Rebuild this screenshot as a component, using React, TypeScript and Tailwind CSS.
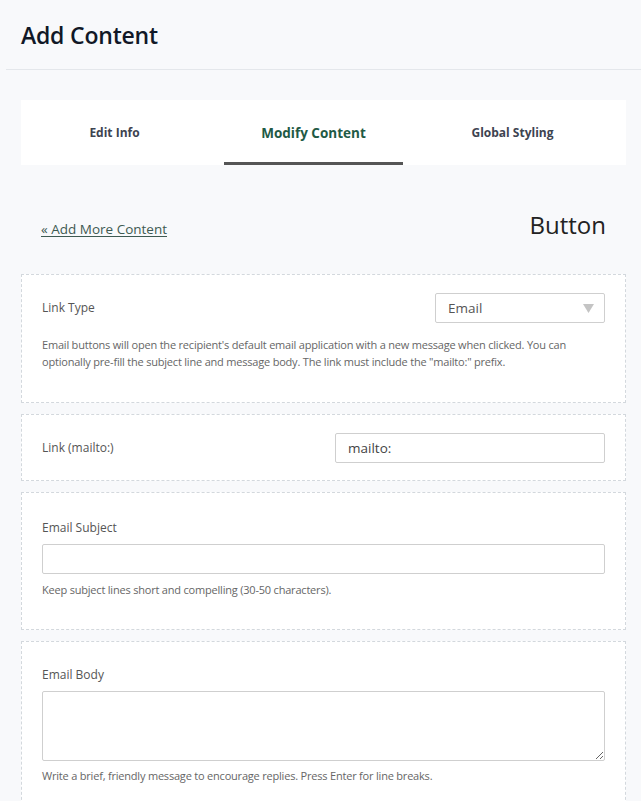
import { useState } from 'react';

const tabs = ['Edit Info', 'Modify Content', 'Global Styling'];

export default function App() {
    const [active, setActive] = useState('Modify Content');
    const [link, setLink] = useState('mailto:');
    const [subject, setSubject] = useState('');
    const [body, setBody] = useState('');

    return (
        <div className="min-h-screen bg-[#f8f9fb] text-[#555] font-['Open_Sans',sans-serif]">
            {/* header */}
            <div className="h-[70px] ml-[6px] border-b border-[#e4e7eb] flex items-center">
                <h1 className="pl-[15px] pt-[2px] text-[23px] font-semibold text-[#111827] tracking-[-0.2px]">Add Content</h1>
            </div>

            <div className="pl-[21px] pr-[15px]">
                {/* tabs */}
                <div className="mt-[30px] h-[65px] bg-white flex pl-[4px] gap-[20px]">
                    {tabs.map(t => (
                        <button
                            key={t}
                            onClick={() => setActive(t)}
                            className={
                                'w-[179px] h-full flex items-center justify-center font-bold border-b-[3px] pt-[4px] ' +
                                (active === t ? 'text-[#1f5a45] text-[13.5px] border-[#555]' : 'text-[12px] text-[#3d4350] border-transparent')
                            }
                        >
                            {t}
                        </button>
                    ))}
                </div>

                {/* link + title */}
                <div className="flex items-center justify-between mt-[42px] h-[35px] pl-[20px] pr-[20px]">
                    <a href="#" className="text-[13.5px] text-[#3e5a52] underline underline-offset-2 mt-[9px]">« Add More Content</a>
                    <div className="text-[24px] text-[#222]">Button</div>
                </div>

                <div className="mt-[32px] flex flex-col gap-[11px]">
                    {/* link type */}
                    <div className="bg-white border border-dashed border-[#d3d8dd] px-[20px] pt-[18px] pb-[32px]">
                        <div className="flex items-center justify-between">
                            <span className="text-[12px]">Link Type</span>
                            <div className="w-[170px] h-[30px] border border-[#cfcfcf] rounded-[2px] flex items-center justify-between pl-[12px] pr-[10px]">
                                <span className="text-[13.5px] text-[#555]">Email</span>
                                <svg width="11" height="9" viewBox="0 0 11 9">
                                    <path d="M0 0h11L5.5 9z" fill="#c4c4c4" />
                                </svg>
                            </div>
                        </div>
                        <p className="mt-[13px] text-[11px] leading-[17px] text-[#666] tracking-[-0.2px]">
                            Email buttons will open the recipient's default email application with a new message when clicked. You can optionally pre-fill the subject line and message body. The link must include the "mailto:" prefix.
                        </p>
                    </div>

                    {/* link */}
                    <div className="bg-white border border-dashed border-[#d3d8dd] px-[20px] pt-[18px] pb-[17px]">
                        <div className="flex items-center justify-between">
                            <span className="text-[12px]">Link (mailto:)</span>
                            <input
                                value={link}
                                onChange={e => setLink(e.target.value)}
                                className="w-[270px] h-[30px] border border-[#cfcfcf] rounded-[2px] px-[12px] text-[13.5px] text-[#444] outline-none"
                            />
                        </div>
                    </div>

                    {/* subject */}
                    <div className="bg-white border border-dashed border-[#d3d8dd] px-[20px] pt-[26px] pb-[30px]">
                        <div className="text-[12px]">Email Subject</div>
                        <input
                            value={subject}
                            onChange={e => setSubject(e.target.value)}
                            className="mt-[7px] w-full h-[30px] border border-[#cfcfcf] rounded-[2px] px-[12px] text-[13.5px] outline-none"
                        />
                        <p className="mt-[8px] text-[11px] text-[#666] tracking-[-0.2px]">Keep subject lines short and compelling (30-50 characters).</p>
                    </div>

                    {/* body */}
                    <div className="bg-white border border-dashed border-[#d3d8dd] px-[20px] pt-[24px] pb-[40px]">
                        <div className="text-[12px]">Email Body</div>
                        <textarea
                            value={body}
                            onChange={e => setBody(e.target.value)}
                            className="block mt-[7px] w-full h-[70px] border border-[#cfcfcf] rounded-[2px] px-[12px] py-[6px] text-[13.5px] outline-none"
                        />
                        <p className="mt-[7px] text-[11px] text-[#666] tracking-[-0.2px]">Write a brief, friendly message to encourage replies. Press Enter for line breaks.</p>
                    </div>
                </div>
            </div>
        </div>
    );
}
